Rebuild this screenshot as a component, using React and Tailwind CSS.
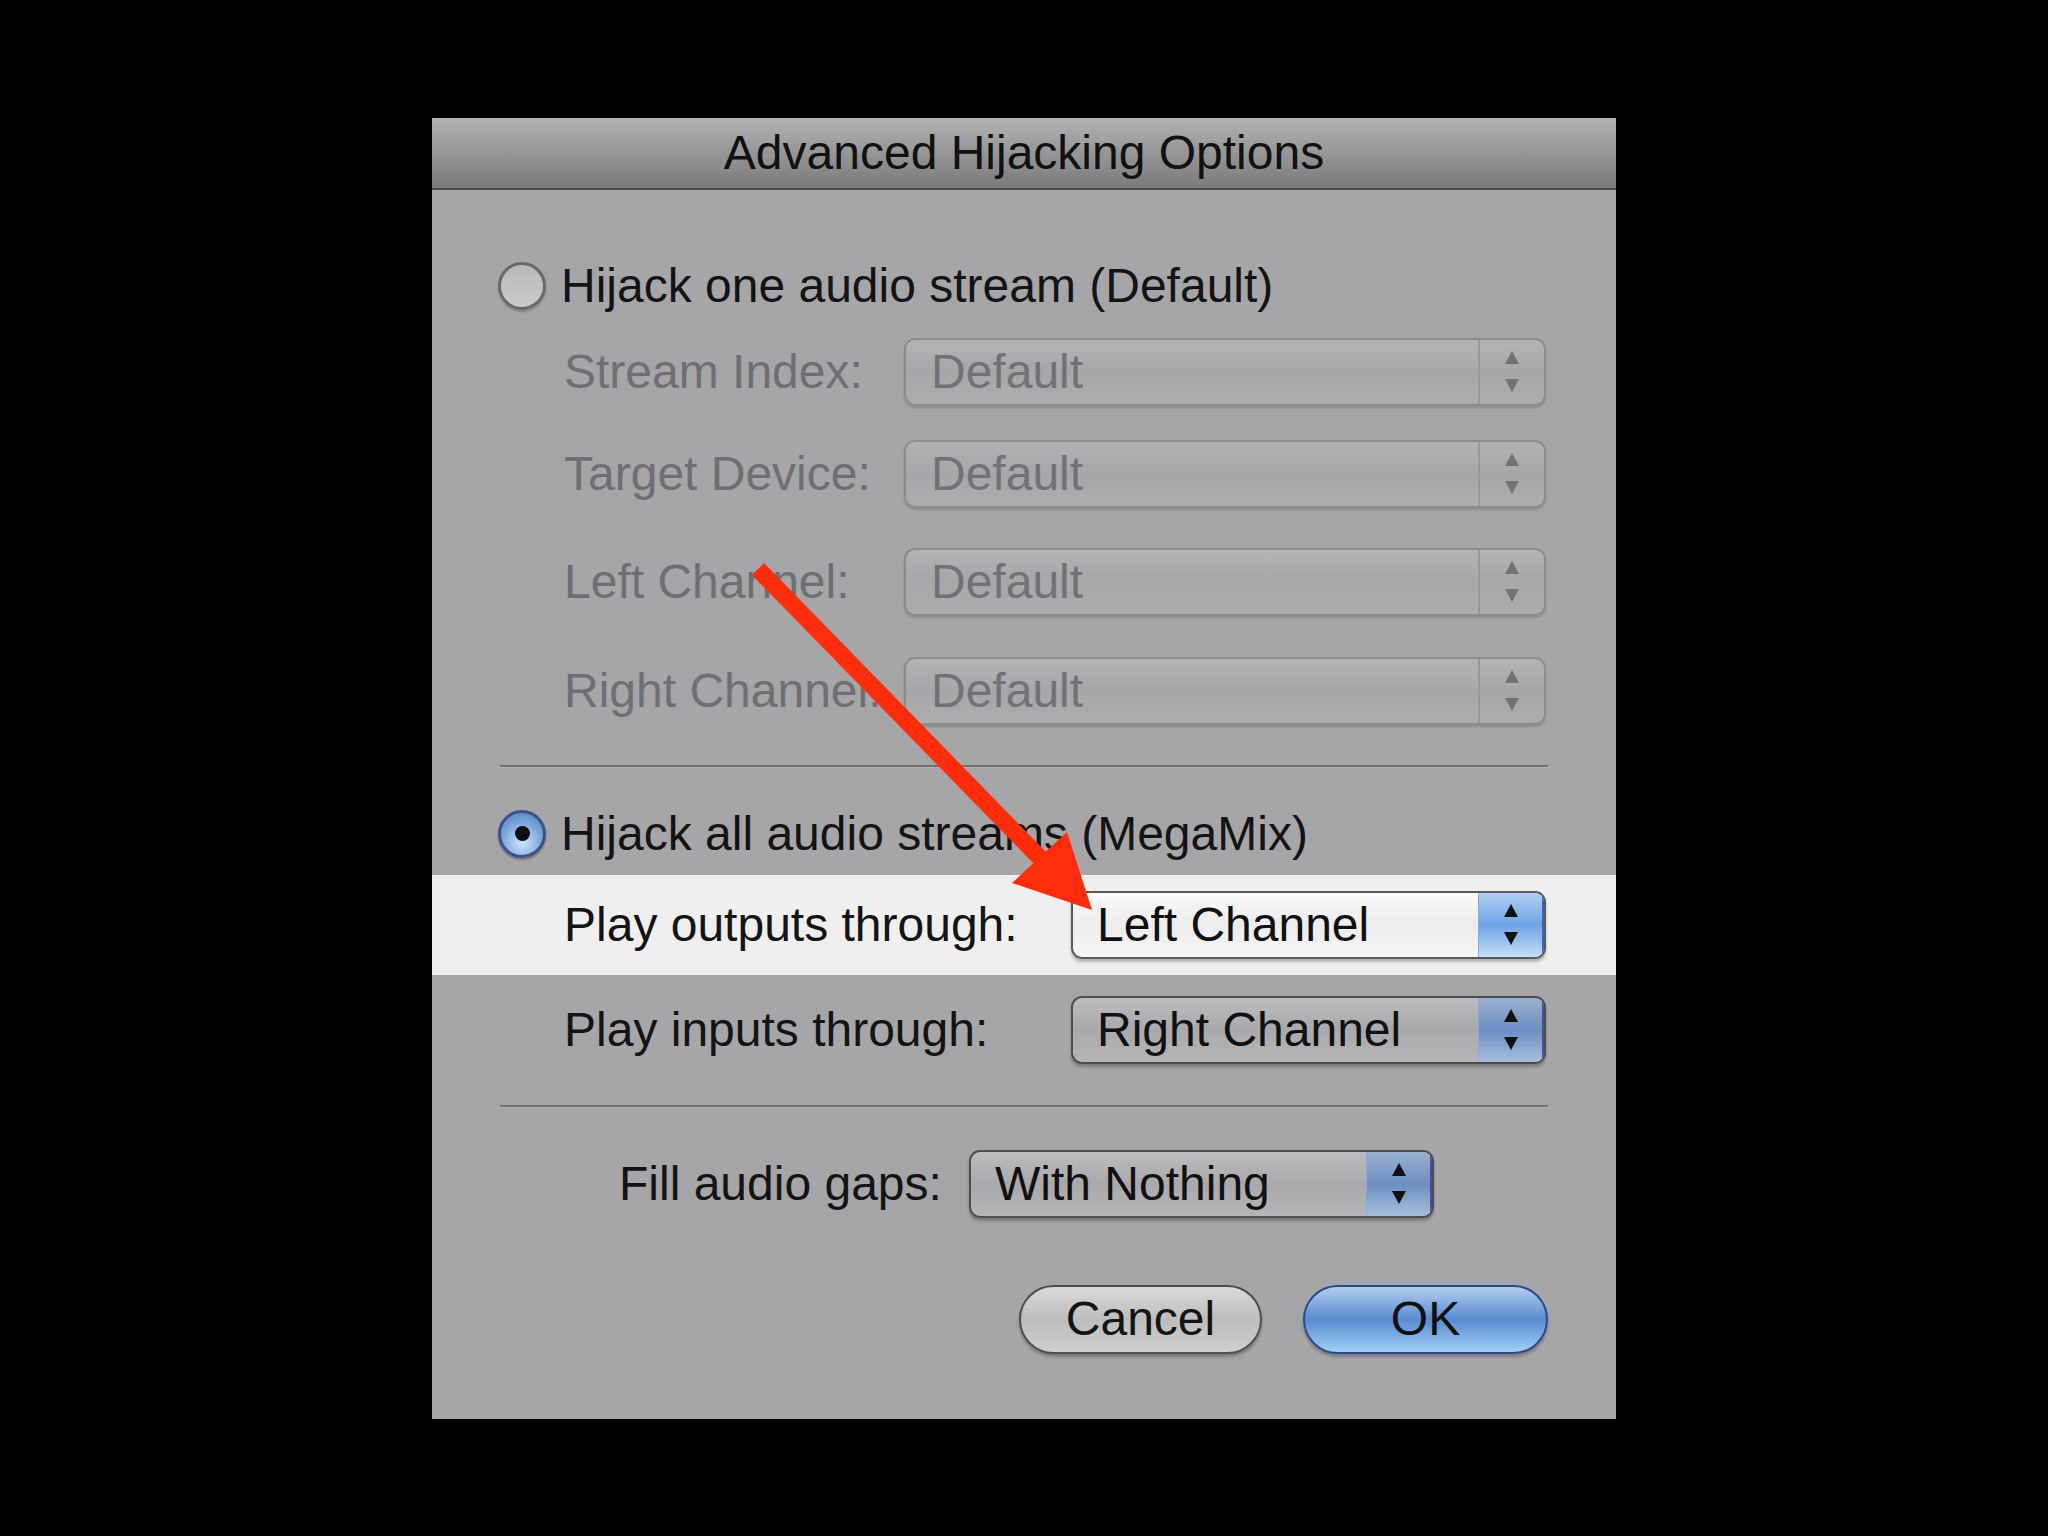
import React from 'react'

const font = { fontFamily: '"Liberation Sans", Arial, sans-serif' }

function Stepper({ tone }) {
  const fill = tone === 'disabled' ? '#727275' : '#111'
  return (
    <svg width="18" height="44" viewBox="0 0 18 44">
      <polygon points="9,1 16,14 2,14" fill={fill} />
      <polygon points="2,29 16,29 9,42" fill={fill} />
    </svg>
  )
}

function Popup({ value, tone, className }) {
  // tone: disabled | active | normal
  if (tone === 'disabled') {
    return (
      <div className={`flex h-[68px] items-stretch rounded-[11px] border-2 border-[#8c8c8f] bg-gradient-to-b from-[#b3b3b5] via-[#a7a7a9] to-[#adadaf] shadow-[0_2px_2px_rgba(0,0,0,0.15)] ${className}`}>
        <div className="flex flex-1 items-center whitespace-nowrap pl-[25px] text-[48px] leading-none text-[#727276]">{value}</div>
        <div className="flex w-[66px] items-center justify-center border-l-2 border-[#98989b]">
          <Stepper tone="disabled" />
        </div>
      </div>
    )
  }
  const body = tone === 'active'
    ? 'bg-gradient-to-b from-[#fbfbfb] via-[#ececec] to-[#f6f6f6] border-[#5a5a5c]'
    : 'bg-gradient-to-b from-[#bdbdbf] via-[#a9a9ab] to-[#b6b6b8] border-[#4e4e50]'
  const step = tone === 'active'
    ? 'bg-gradient-to-b from-[#b4d0f4] via-[#6ea2e6] to-[#c4e0fa] border-[#3f63b0]'
    : 'bg-gradient-to-b from-[#9bb0cf] via-[#6c8fc2] to-[#a6bfdc] border-[#3b5590]'
  return (
    <div className={`flex h-[68px] items-stretch overflow-hidden rounded-[11px] border-2 shadow-[0_3px_3px_rgba(0,0,0,0.25)] ${body} ${className}`}>
      <div className="flex flex-1 items-center whitespace-nowrap pl-[24px] text-[48px] leading-none text-[#111]">{value}</div>
      <div className={`flex w-[66px] items-center justify-center border-l border-r-2 border-l-[#8aa8d8] ${step}`}>
        <Stepper tone="active" />
      </div>
    </div>
  )
}

function Radio({ checked }) {
  if (checked) {
    return (
      <div className="flex h-[48px] w-[48px] shrink-0 items-center justify-center rounded-full border-[3px] border-[#3a5288] bg-[radial-gradient(circle_at_50%_70%,#cfe6fb_0%,#7ba6dc_55%,#4f79bd_100%)] shadow-[0_2px_2px_rgba(0,0,0,0.3)]">
        <div className="h-[15px] w-[15px] rounded-full bg-[#0d0d12]" />
      </div>
    )
  }
  return (
    <div className="h-[48px] w-[48px] shrink-0 rounded-full border-[3px] border-[#69696c] bg-gradient-to-b from-[#b8b8ba] to-[#cbcbcd] shadow-[0_2px_2px_rgba(0,0,0,0.2)]" />
  )
}

function LabeledRow({ label, value, className }) {
  return (
    <div className={`flex h-[68px] items-center pl-[132px] pr-[70px] ${className}`}>
      <div className="w-[340px] whitespace-nowrap text-[48px] leading-none text-[#6f6f73]">{label}</div>
      <Popup value={value} tone="disabled" className="w-[642px]" />
    </div>
  )
}

export default function App() {
  return (
    <div className="flex min-h-screen items-center justify-center bg-black" style={font}>
      <div className="relative flex w-[1184px] flex-col bg-[#a6a5a8]">
        {/* title bar */}
        <div className="flex h-[72px] items-center justify-center whitespace-nowrap border-b-2 border-[#4d4d4f] bg-gradient-to-b from-[#b2b2b3] to-[#7b7b7c] text-[48px] leading-none text-[#111]">
          Advanced Hijacking Options
        </div>

        {/* one stream */}
        <div className="mt-[66px] flex h-[60px] items-center gap-[15px] pl-[66px]">
          <Radio />
          <span className="whitespace-nowrap text-[48px] leading-none text-[#141414]">Hijack one audio stream (Default)</span>
        </div>
        <LabeledRow label="Stream Index:" value="Default" className="mt-[22px]" />
        <LabeledRow label="Target Device:" value="Default" className="mt-[34px]" />
        <LabeledRow label="Left Channel:" value="Default" className="mt-[40px]" />
        <LabeledRow label="Right Channel:" value="Default" className="mt-[41px]" />

        <div className="mx-[68px] mt-[40px] h-[3px] border-t-2 border-b border-t-[#717173] border-b-[#b4b4b6]" />

        {/* megamix */}
        <div className="mt-[36px] flex h-[60px] items-center gap-[15px] pl-[66px]">
          <Radio checked />
          <span className="whitespace-nowrap text-[48px] leading-none text-[#141414]">Hijack all audio streams (MegaMix)</span>
        </div>

        <div className="mt-[11px] flex h-[100px] items-center bg-[#efefef] pl-[132px] pr-[70px]">
          <div className="w-[507px] whitespace-nowrap text-[48px] leading-none text-[#141414]">Play outputs through:</div>
          <Popup value="Left Channel" tone="active" className="w-[475px]" />
        </div>

        <div className="mt-[21px] flex h-[68px] items-center pl-[132px] pr-[70px]">
          <div className="w-[507px] whitespace-nowrap text-[48px] leading-none text-[#141414]">Play inputs through:</div>
          <Popup value="Right Channel" tone="normal" className="w-[475px]" />
        </div>

        <div className="mx-[68px] mt-[41px] h-[3px] border-t-2 border-b border-t-[#717173] border-b-[#b4b4b6]" />

        <div className="mt-[42px] flex h-[68px] items-center pl-[187px]">
          <div className="w-[350px] whitespace-nowrap text-[48px] leading-none text-[#141414]">Fill audio gaps:</div>
          <Popup value="With Nothing" tone="normal" className="w-[465px]" />
        </div>

        {/* buttons */}
        <div className="mt-[67px] flex justify-end gap-[41px] pr-[68px] pb-[65px]">
          <button className="flex h-[69px] w-[243px] items-center justify-center rounded-full border-2 border-[#4e4e50] bg-gradient-to-b from-[#dadada] via-[#bdbdbd] to-[#cfcfcf] text-[48px] leading-none text-[#141414] shadow-[0_3px_3px_rgba(0,0,0,0.25)]">
            Cancel
          </button>
          <button className="flex h-[69px] w-[245px] items-center justify-center rounded-full border-2 border-[#2a4a8e] bg-gradient-to-b from-[#b2cdee] via-[#5a8bd0] to-[#a2d0f2] text-[48px] leading-none text-[#111] shadow-[0_3px_3px_rgba(0,0,0,0.25)]">
            OK
          </button>
        </div>

        {/* annotation arrow */}
        <svg className="pointer-events-none absolute left-0 top-0" width="1184" height="1303" viewBox="0 0 1184 1303">
          <line x1="326" y1="451" x2="612" y2="744" stroke="#ff2d0b" strokeWidth="17" />
          <polygon points="660,792 580,765 635,714" fill="#ff2d0b" />
        </svg>
      </div>
    </div>
  )
}
